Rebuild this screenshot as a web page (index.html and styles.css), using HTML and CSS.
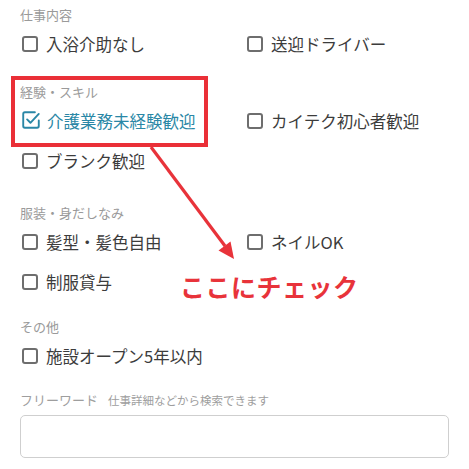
FILE: index.html
```html
<!DOCTYPE html>
<html lang="ja">
<head>
<meta charset="utf-8">
<link rel="stylesheet" href="styles.css">
</head>
<body>
<div class="page">
  <section class="group">
    <div class="group-label">仕事内容</div>
    <div class="options">
      <label class="opt"><span class="box"></span><span>入浴介助なし</span></label>
      <label class="opt"><span class="box"></span><span>送迎ドライバー</span></label>
    </div>
  </section>
  <section class="group group-skill">
    <div class="group-label">経験・スキル</div>
    <div class="options">
      <label class="opt checked"><svg class="checkmark" viewBox="0 0 18 18" width="20" height="20"><path d="M12.5 2H3.5A1.5 1.5 0 0 0 2 3.5v11A1.5 1.5 0 0 0 3.5 16h11a1.5 1.5 0 0 0 1.5-1.5V9.5" fill="none" stroke="currentColor" stroke-width="1.7" stroke-linecap="round" stroke-linejoin="round"/><path d="M5.5 8.5l3 3 7.5-8" fill="none" stroke="currentColor" stroke-width="1.7" stroke-linecap="round" stroke-linejoin="round"/></svg><span>介護業務未経験歓迎</span></label>
      <label class="opt"><span class="box"></span><span>カイテク初心者歓迎</span></label>
      <label class="opt"><span class="box"></span><span>ブランク歓迎</span></label>
    </div>
  </section>
  <section class="group group-dress">
    <div class="group-label">服装・身だしなみ</div>
    <div class="options">
      <label class="opt"><span class="box"></span><span>髪型・髪色自由</span></label>
      <label class="opt"><span class="box"></span><span>ネイルOK</span></label>
      <label class="opt"><span class="box"></span><span>制服貸与</span></label>
    </div>
  </section>
  <section class="group group-other">
    <div class="group-label">その他</div>
    <div class="options">
      <label class="opt"><span class="box"></span><span>施設オープン5年以内</span></label>
    </div>
  </section>
  <section class="free">
    <div class="free-label">フリーワード<span class="free-hint">仕事詳細などから検索できます</span></div>
    <div class="free-input"></div>
  </section>

  <div class="highlight"></div>
  <svg class="arrow" width="469" height="469" viewBox="0 0 469 469">
    <line x1="151" y1="147" x2="225" y2="246" stroke="#e8333a" stroke-width="3.2"/>
    <polygon points="234,259 230.5,241.5 218.5,250.5" fill="#e8333a"/>
  </svg>
  <div class="callout">ここにチェック</div>
</div>
</body>
</html>
```
FILE: styles.css
```css
html, body {
  margin: 0;
  padding: 0;
  background: #ffffff;
}
body {
  font-family: "Noto Sans CJK JP", "Noto Sans", sans-serif;
  color: #3c3c3c;
}
.page {
  position: relative;
  width: 469px;
  height: 469px;
  overflow: hidden;
  box-sizing: border-box;
  padding: 6px 20px 0 20px;
}
.group-skill {
  margin-top: 19px;
}
.group-dress {
  margin-top: 23px;
}
.group-other {
  margin-top: 16px;
}
.group-label {
  font-size: 13px;
  line-height: 18px;
  color: #9a9a9a;
}
.options {
  display: grid;
  grid-template-columns: 225px 1fr;
}
.opt {
  display: flex;
  align-items: center;
  height: 40px;
  font-size: 16.5px;
  gap: 8px;
  white-space: nowrap;
}
.box {
  width: 16px;
  height: 16px;
  box-sizing: border-box;
  border: 2px solid #6e6e6e;
  border-radius: 3px;
  margin-left: 2px;
  flex: none;
}
.checked {
  color: #2a87a6;
}
.checkmark {
  margin-left: 1px;
  margin-right: -2px;
  margin-top: -2px;
  flex: none;
}
.free {
  margin-top: 15px;
}
.free-label {
  font-size: 13px;
  line-height: 18px;
  color: #9e9e9e;
}
.free-hint {
  font-size: 11.5px;
  margin-left: 10px;
}
.free-input {
  margin-top: 6px;
  height: 43px;
  box-sizing: border-box;
  border: 1px solid #cfcfcf;
  border-radius: 5px;
}
.highlight {
  position: absolute;
  left: 11px;
  top: 76px;
  width: 197px;
  height: 71px;
  box-sizing: border-box;
  border: 4px solid #ea2f37;
}
.arrow {
  position: absolute;
  left: 0;
  top: 0;
}
.callout {
  position: absolute;
  left: 180px;
  top: 268px;
  font-size: 25px;
  font-weight: 700;
  color: #e8333a;
  letter-spacing: 0.5px;
}
```
